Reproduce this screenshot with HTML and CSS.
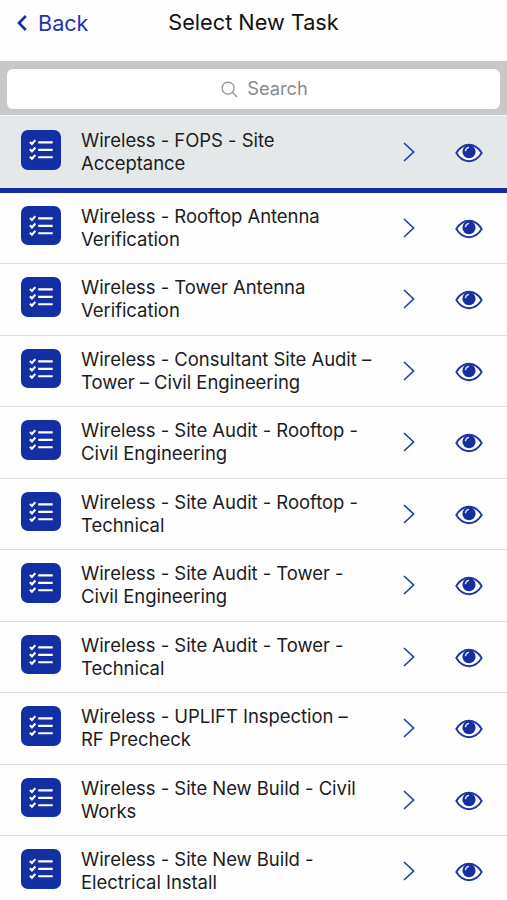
FILE: index.html
```
<!DOCTYPE html>
<html lang="en">
<head>
  <meta charset="UTF-8" />
  <meta name="viewport" content="width=device-width, initial-scale=1" />
  <title>Select New Task</title>
  <link rel="stylesheet" href="styles.css">
</head>
<body>

  <!-- shared icons -->
  <svg class="sprite" aria-hidden="true">
    <symbol id="list" viewBox="0 0 39 39">
      <g fill="none" stroke="#fff">
        <path stroke-width="2.2" d="M17 12.3h14.3M17 19.6h14.3M17 26.9h14.3" />
        <path stroke-width="2.1" d="M8.8 11.8l2 2 3.4-3.8M8.8 19.1l2 2 3.4-3.8M8.8 26.4l2 2 3.4-3.8" />
      </g>
    </symbol>
    <symbol id="chevron" viewBox="0 0 12 20">
      <path fill="none" stroke="#2341ab" stroke-width="1.7" d="M1 1l9.6 9L1 19" />
    </symbol>
    <symbol id="eye" viewBox="0 0 28 20">
      <path fill="#fff" fill-opacity=".65" stroke="#1d36a3" stroke-width="1.9" stroke-linejoin="round" d="M1.3 10C4.7 4.5 9 1.8 14 1.8S23.300 4.500 26.700 10C23.300 15.500 19 18.200 14 18.200S4.700 15.500 1.300 10z" />
      <circle cx="14" cy="8.700" r="6.600" fill="#152f9f" />
      <path fill="none" stroke="#dfe5f7" stroke-width="1.500" stroke-linecap="round" d="M10.500 7.600c.3-1.700 1.300-2.700 2.900-3" />
    </symbol>
  </svg>

  <header class="navbar">
    <a class="back" href="#">
      <svg class="back-icon" viewBox="0 0 10 16"><path d="M8.800 1L2 8l6.800 7" /></svg>
      Back
    </a>
    <h1>Select New Task</h1>
  </header>

  <div class="searchbar">
    <div class="search-field">
      <svg class="search-icon" viewBox="0 0 18 18">
        <circle cx="7.500" cy="7.500" r="6.400" />
        <path d="M12 12l5 5" />
      </svg>
      <span>Search</span>
    </div>
  </div>

  <ul class="tasks">
    <li class="task selected">
      <svg class="task-icon"><use href="#list" /></svg>
      <p>Wireless - FOPS - Site<br>Acceptance</p>
      <svg class="chevron"><use href="#chevron" /></svg>
      <svg class="eye"><use href="#eye" /></svg>
    </li>
    <li class="task">
      <svg class="task-icon"><use href="#list" /></svg>
      <p>Wireless - Rooftop Antenna<br>Verification</p>
      <svg class="chevron"><use href="#chevron" /></svg>
      <svg class="eye"><use href="#eye" /></svg>
    </li>
    <li class="task">
      <svg class="task-icon"><use href="#list" /></svg>
      <p>Wireless - Tower Antenna<br>Verification</p>
      <svg class="chevron"><use href="#chevron" /></svg>
      <svg class="eye"><use href="#eye" /></svg>
    </li>
    <li class="task">
      <svg class="task-icon"><use href="#list" /></svg>
      <p>Wireless - Consultant Site Audit –<br>Tower – Civil Engineering</p>
      <svg class="chevron"><use href="#chevron" /></svg>
      <svg class="eye"><use href="#eye" /></svg>
    </li>
    <li class="task">
      <svg class="task-icon"><use href="#list" /></svg>
      <p>Wireless - Site Audit - Rooftop -<br>Civil Engineering</p>
      <svg class="chevron"><use href="#chevron" /></svg>
      <svg class="eye"><use href="#eye" /></svg>
    </li>
    <li class="task">
      <svg class="task-icon"><use href="#list" /></svg>
      <p>Wireless - Site Audit - Rooftop -<br>Technical</p>
      <svg class="chevron"><use href="#chevron" /></svg>
      <svg class="eye"><use href="#eye" /></svg>
    </li>
    <li class="task">
      <svg class="task-icon"><use href="#list" /></svg>
      <p>Wireless - Site Audit - Tower -<br>Civil Engineering</p>
      <svg class="chevron"><use href="#chevron" /></svg>
      <svg class="eye"><use href="#eye" /></svg>
    </li>
    <li class="task">
      <svg class="task-icon"><use href="#list" /></svg>
      <p>Wireless - Site Audit - Tower -<br>Technical</p>
      <svg class="chevron"><use href="#chevron" /></svg>
      <svg class="eye"><use href="#eye" /></svg>
    </li>
    <li class="task">
      <svg class="task-icon"><use href="#list" /></svg>
      <p>Wireless - UPLIFT Inspection –<br>RF Precheck</p>
      <svg class="chevron"><use href="#chevron" /></svg>
      <svg class="eye"><use href="#eye" /></svg>
    </li>
    <li class="task">
      <svg class="task-icon"><use href="#list" /></svg>
      <p>Wireless - Site New Build - Civil<br>Works</p>
      <svg class="chevron"><use href="#chevron" /></svg>
      <svg class="eye"><use href="#eye" /></svg>
    </li>
    <li class="task">
      <svg class="task-icon"><use href="#list" /></svg>
      <p>Wireless - Site New Build -<br>Electrical Install</p>
      <svg class="chevron"><use href="#chevron" /></svg>
      <svg class="eye"><use href="#eye" /></svg>
    </li>
  </ul>

</body>
</html>
```
FILE: styles.css
```
* {
  box-sizing: border-box;
}
body {
  margin: 0;
  height: 900px;
  overflow: hidden;
  background: #fefefe;
  color: #1c1c1e;
  font-family: Inter, "Liberation Sans", sans-serif;
}
.sprite {
  display: none;
}
.navbar {
  display: grid;
  grid-template-columns: 1fr auto 1fr;
  height: 61px;
  padding: 7px 17px 0;
  line-height: 30px;
}
.navbar h1 {
  margin: 0;
  font-size: 21.7px;
  font-weight: 400;
  color: #111;
}
.back {
  display: flex;
  align-items: center;
  gap: 11px;
  height: 31px;
  font-size: 21.6px;
  color: #1f36a8;
  text-decoration: none;
}
.back-icon {
  width: 10px;
  height: 16px;
  fill: none;
  stroke: #1430a4;
  stroke-width: 2.6;
}
.searchbar {
  height: 54px;
  padding: 8px 7px 0;
  background: #c8c8cb;
}
.search-field {
  display: flex;
  align-items: center;
  justify-content: center;
  gap: 9px;
  height: 40px;
  padding-left: 22px;
  border-radius: 6px;
  background: #fff;
  color: #8a8a8c;
  font-size: 18.3px;
}
.search-field span {
  margin-top: -2px;
}
.search-icon {
  width: 17px;
  height: 17px;
  fill: none;
  stroke: #8e8e90;
  stroke-width: 1.3;
}
.tasks {
  list-style: none;
  margin: 0;
  padding: 0;
  border-top: 1px solid #f3f3f4;
}
.task {
  display: flex;
  align-items: flex-start;
  height: 71.5px;
  padding: 13px 24px 0 21px;
  border-bottom: 1.5px solid #dcdcde;
}
.task.selected {
  height: 76.5px;
  padding-top: 14px;
  border-bottom: 5px solid #142c9c;
  background: #e5e8e9;
}
.task p {
  flex: 1;
  margin: -1px 0 0 20.5px;
  font-size: 18.5px;
  line-height: 23px;
  letter-spacing: -0.05px;
  white-space: nowrap;
}
.task-icon {
  width: 39.5px;
  height: 39.5px;
  border-radius: 7px;
  background: #142fa3;
}
.chevron {
  width: 12px;
  height: 20px;
  margin: 12px 40px 0 0;
}
.eye {
  width: 28px;
  height: 20px;
  margin-top: 13px;
}
```
